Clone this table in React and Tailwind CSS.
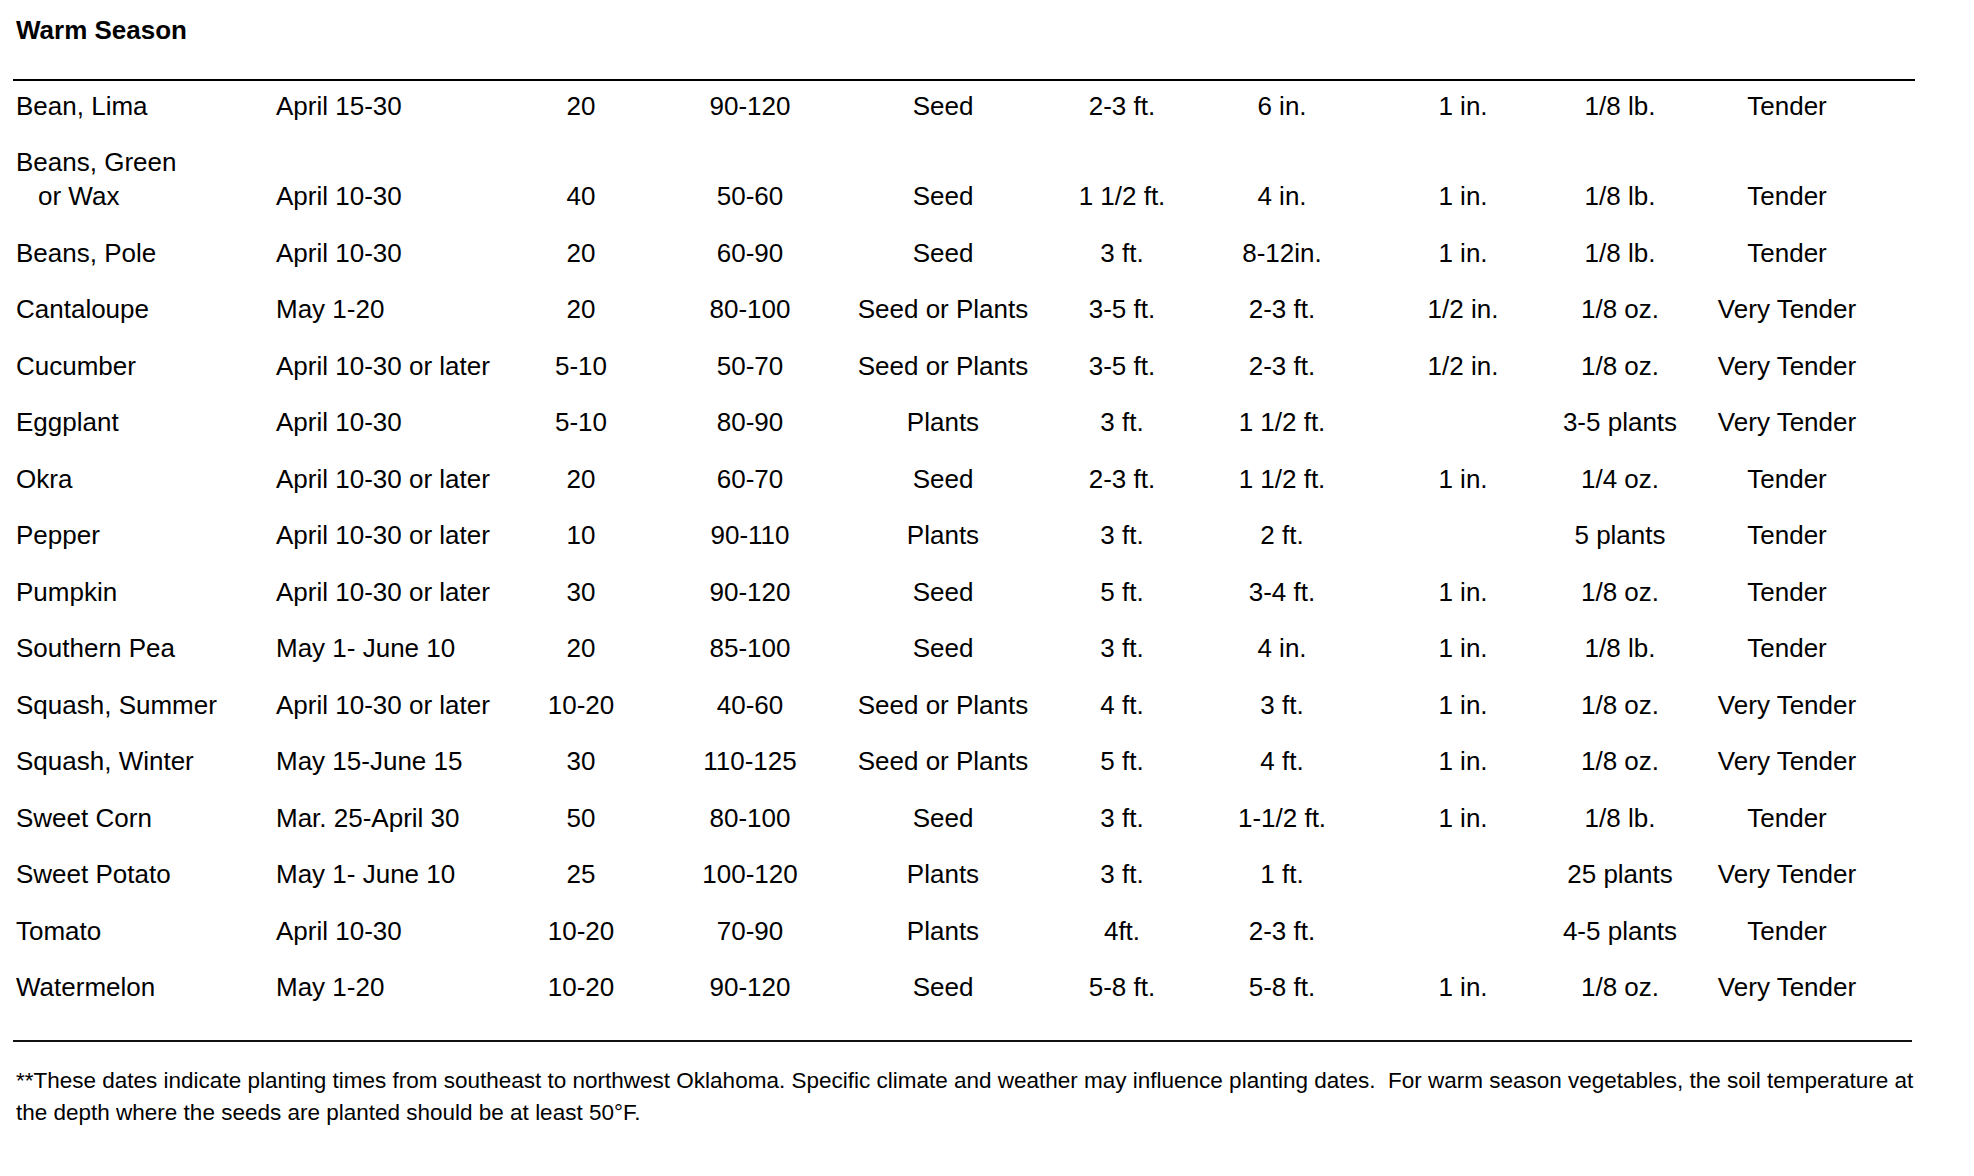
import React from 'react'

// Warm season planting table
const rows = [
  [['Bean, Lima'], 'April 15-30', '20', '90-120', 'Seed', '2-3 ft.', '6 in.', '1 in.', '1/8 lb.', 'Tender'],
  [['Beans, Green', 'or Wax'], 'April 10-30', '40', '50-60', 'Seed', '1 1/2 ft.', '4 in.', '1 in.', '1/8 lb.', 'Tender'],
  [['Beans, Pole'], 'April 10-30', '20', '60-90', 'Seed', '3 ft.', '8-12in.', '1 in.', '1/8 lb.', 'Tender'],
  [['Cantaloupe'], 'May 1-20', '20', '80-100', 'Seed or Plants', '3-5 ft.', '2-3 ft.', '1/2 in.', '1/8 oz.', 'Very Tender'],
  [['Cucumber'], 'April 10-30 or later', '5-10', '50-70', 'Seed or Plants', '3-5 ft.', '2-3 ft.', '1/2 in.', '1/8 oz.', 'Very Tender'],
  [['Eggplant'], 'April 10-30', '5-10', '80-90', 'Plants', '3 ft.', '1 1/2 ft.', '', '3-5 plants', 'Very Tender'],
  [['Okra'], 'April 10-30 or later', '20', '60-70', 'Seed', '2-3 ft.', '1 1/2 ft.', '1 in.', '1/4 oz.', 'Tender'],
  [['Pepper'], 'April 10-30 or later', '10', '90-110', 'Plants', '3 ft.', '2 ft.', '', '5 plants', 'Tender'],
  [['Pumpkin'], 'April 10-30 or later', '30', '90-120', 'Seed', '5 ft.', '3-4 ft.', '1 in.', '1/8 oz.', 'Tender'],
  [['Southern Pea'], 'May 1- June 10', '20', '85-100', 'Seed', '3 ft.', '4 in.', '1 in.', '1/8 lb.', 'Tender'],
  [['Squash, Summer'], 'April 10-30 or later', '10-20', '40-60', 'Seed or Plants', '4 ft.', '3 ft.', '1 in.', '1/8 oz.', 'Very Tender'],
  [['Squash, Winter'], 'May 15-June 15', '30', '110-125', 'Seed or Plants', '5 ft.', '4 ft.', '1 in.', '1/8 oz.', 'Very Tender'],
  [['Sweet Corn'], 'Mar. 25-April 30', '50', '80-100', 'Seed', '3 ft.', '1-1/2 ft.', '1 in.', '1/8 lb.', 'Tender'],
  [['Sweet Potato'], 'May 1- June 10', '25', '100-120', 'Plants', '3 ft.', '1 ft.', '', '25 plants', 'Very Tender'],
  [['Tomato'], 'April 10-30', '10-20', '70-90', 'Plants', '4ft.', '2-3 ft.', '', '4-5 plants', 'Tender'],
  [['Watermelon'], 'May 1-20', '10-20', '90-120', 'Seed', '5-8 ft.', '5-8 ft.', '1 in.', '1/8 oz.', 'Very Tender'],
]

function Row({ row }) {
  const [name, date, ...rest] = row
  return (
    <div className="grid grid-cols-[260px_225px_160px_178px_208px_150px_170px_192px_122px_212px] items-end pt-[7.5px] pb-[15px] leading-[34px]">
      <div className="whitespace-nowrap">
        {name.map((n, i) => (
          <div key={i} className={i > 0 ? 'pl-[22px]' : ''}>{n}</div>
        ))}
      </div>
      <div className="whitespace-nowrap">{date}</div>
      {rest.map((c, i) => (
        <div key={i} className="text-center whitespace-nowrap">{c || '\u00a0'}</div>
      ))}
    </div>
  )
}

export default function App() {
  return (
    <div className="w-[1974px] min-h-[1176px] bg-white text-black font-['Liberation_Sans',Arial,sans-serif] pl-[16px] pt-[13px]">
      <h2 className="text-[26px] font-bold leading-[34px]">Warm Season</h2>

      <div className="mt-[32px] ml-[-3px] w-[1902px] h-[2px] bg-black" />

      <div className="text-[26px]">
        {rows.map((r, i) => <Row key={i} row={r} />)}
      </div>

      <div className="mt-[21px] ml-[-3px] w-[1899px] h-[2px] bg-[#111]" />

      <div className="mt-[23px] text-[22.5px] leading-[32px] whitespace-nowrap">
        <div>**These dates indicate planting times from southeast to northwest Oklahoma. Specific climate and weather may influence planting dates.{'\u00a0 '}For warm season vegetables, the soil temperature at</div>
        <div>the depth where the seeds are planted should be at least 50°F.</div>
      </div>
    </div>
  )
}
